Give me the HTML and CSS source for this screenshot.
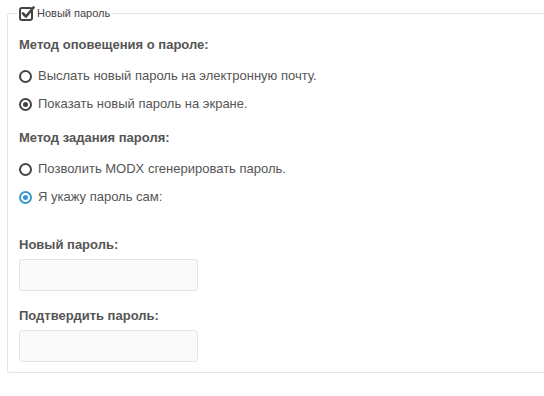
FILE: index.html
```html
<!DOCTYPE html>
<html lang="ru">
<head>
    <meta charset="UTF-8">
    <title>Новый пароль</title>
    <link rel="stylesheet" href="styles.css">
</head>
<body>
    <fieldset class="pw-box">
        <legend class="pw-legend">
            <span class="check-icon">
                <svg width="16" height="16" viewBox="0 0 16 16">
                    <rect x="1" y="3" width="12" height="12" rx="2" fill="none" stroke="#444" stroke-width="2"/>
                    <path d="M4 8.5 L7 11.5 L14.5 2.5" fill="none" stroke="#444" stroke-width="2.6" stroke-linecap="round" stroke-linejoin="round"/>
                </svg>
            </span>
            Новый пароль
        </legend>

        <div class="group-title first">Метод оповещения о пароле:</div>
        <label class="radio-row"><span class="radio"></span>Выслать новый пароль на электронную почту.</label>
        <label class="radio-row"><span class="radio checked"></span>Показать новый пароль на экране.</label>

        <div class="group-title">Метод задания пароля:</div>
        <label class="radio-row"><span class="radio"></span>Позволить MODX сгенерировать пароль.</label>
        <label class="radio-row"><span class="radio checked blue"></span>Я укажу пароль сам:</label>

        <div class="field first-field">
            <div class="field-label">Новый пароль:</div>
            <div class="field-input"></div>
        </div>
        <div class="field">
            <div class="field-label">Подтвердить пароль:</div>
            <div class="field-input"></div>
        </div>
    </fieldset>
</body>
</html>
```

FILE: styles.css
```css
:root {
    --text: #555555;
    --dark: #444444;
    --border: #e4e4e4;
    --blue: #3697cd;
    --input-bg: #fafafa;
}
*, *::before, *::after { box-sizing: border-box; }
body { margin: 0; padding-top: 5px; background: #fff; font-family: "Liberation Sans", Arial, sans-serif; font-size: 13px; color: var(--text); }
.pw-box { margin: 0 -10px 0 7px; padding: 0 11px 10px 11px; border: 1px solid var(--border); border-radius: 3px; }
.pw-legend { display: flex; align-items: center; gap: 2px; margin-left: -2px; padding: 0 2px; font-size: 11px; color: var(--dark); height: 16px; line-height: 16px; }
.check-icon { display: flex; width: 16px; height: 16px; }
.group-title { font-weight: bold; line-height: 18px; margin: 16px 0 13px; }
.group-title.first { margin-top: 15px; }
.radio-row { display: flex; align-items: center; gap: 6px; line-height: 18px; margin-bottom: 10px; }
.radio { width: 13px; height: 13px; margin-top: 1px; border: 2px solid var(--dark); border-radius: 50%; display: flex; align-items: center; justify-content: center; flex-shrink: 0; }
.radio.checked::after { content: ""; width: 5px; height: 5px; border-radius: 50%; background: var(--dark); }
.radio.blue { border-color: var(--blue); }
.radio.blue::after { background: var(--blue); }
.field { margin-top: 16px; }
.field.first-field { margin-top: 30px; }
.field-label { font-weight: bold; line-height: 18px; margin-bottom: 5px; }
.field-input { width: 179px; height: 32px; background: var(--input-bg); border: 1px solid var(--border); border-radius: 3px; }
```
